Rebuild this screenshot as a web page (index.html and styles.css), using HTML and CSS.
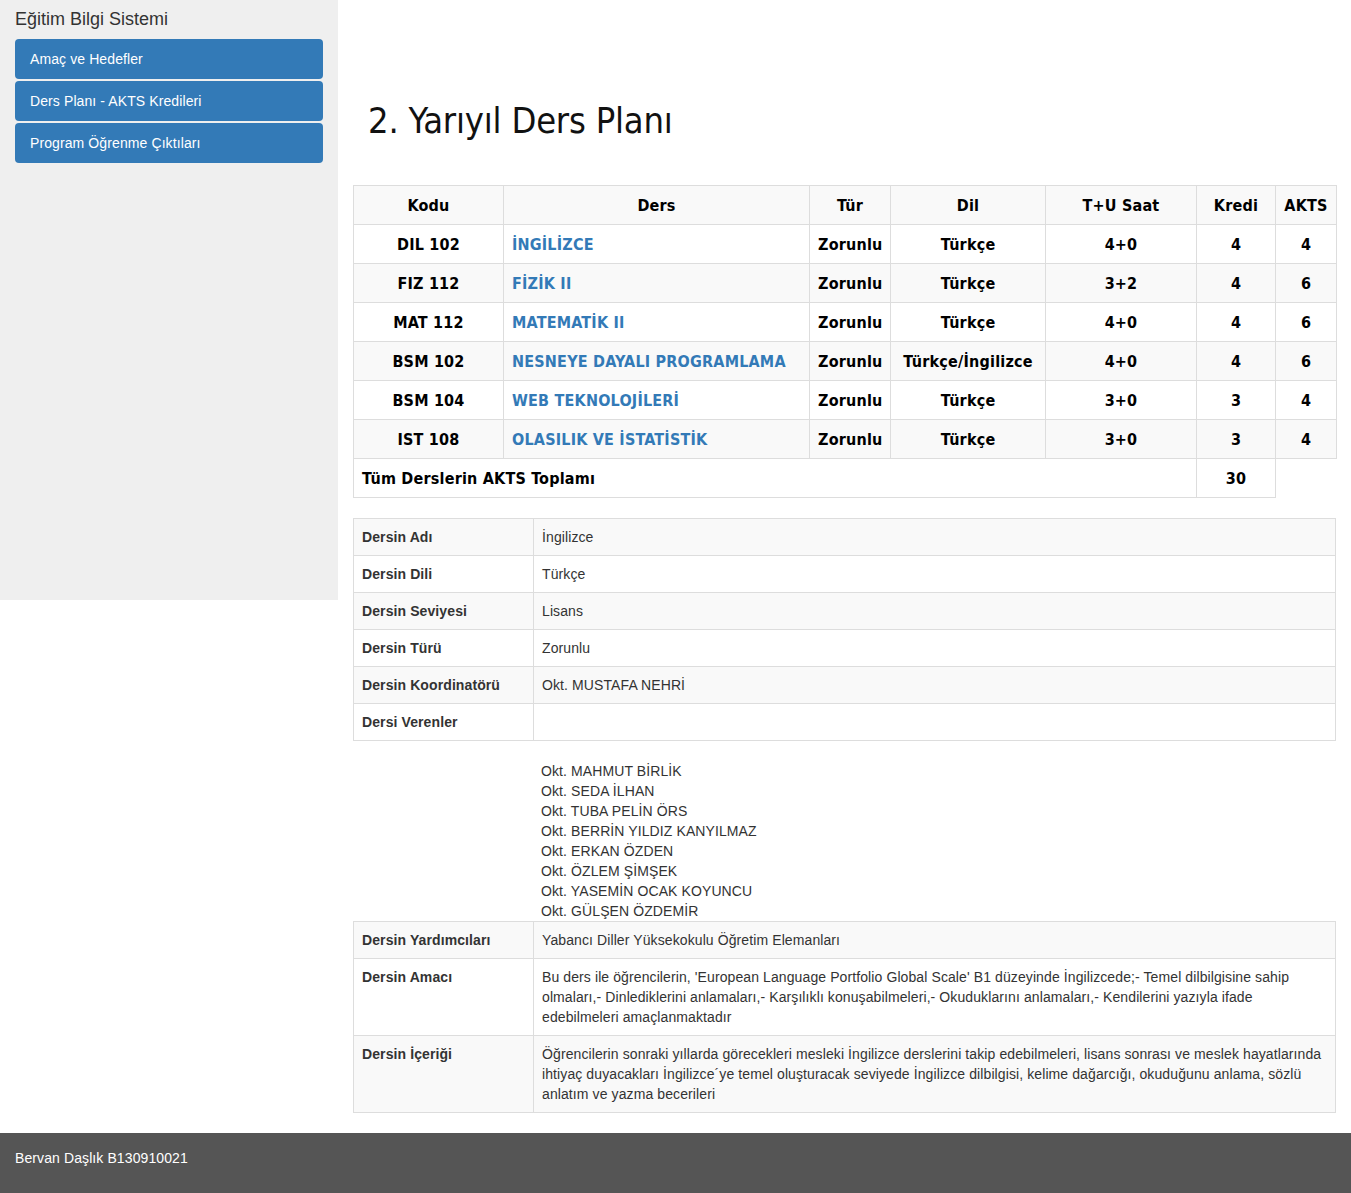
FILE: index.html
```html
<!DOCTYPE html>
<html lang="tr">
<head>
<meta charset="utf-8">
<title>Eğitim Bilgi Sistemi</title>
<link rel="stylesheet" href="styles.css">
</head>
<body>
<div class="layout">
  <aside class="sidebar">
    <div class="brand">Eğitim Bilgi Sistemi</div>
    <nav class="menu">
      <a class="menu-item" href="#">Amaç ve Hedefler</a>
      <a class="menu-item" href="#">Ders Planı - AKTS Kredileri</a>
      <a class="menu-item" href="#">Program Öğrenme Çıktıları</a>
    </nav>
  </aside>
  <main class="content">
    <h1 class="page-title">2. Yarıyıl Ders Planı</h1>
    <table class="plan">
      <colgroup>
        <col class="c-kod"><col class="c-ders"><col class="c-tur"><col class="c-dil"><col class="c-saat"><col class="c-kredi"><col class="c-akts">
      </colgroup>
      <tbody>
        <tr><th>Kodu</th><th>Ders</th><th>Tür</th><th>Dil</th><th>T+U Saat</th><th>Kredi</th><th>AKTS</th></tr>
        <tr><td>DIL 102</td><td class="name"><a href="#">İNGİLİZCE</a></td><td>Zorunlu</td><td>Türkçe</td><td>4+0</td><td>4</td><td>4</td></tr>
        <tr><td>FIZ 112</td><td class="name"><a href="#">FİZİK II</a></td><td>Zorunlu</td><td>Türkçe</td><td>3+2</td><td>4</td><td>6</td></tr>
        <tr><td>MAT 112</td><td class="name"><a href="#">MATEMATİK II</a></td><td>Zorunlu</td><td>Türkçe</td><td>4+0</td><td>4</td><td>6</td></tr>
        <tr><td>BSM 102</td><td class="name"><a href="#">NESNEYE DAYALI PROGRAMLAMA</a></td><td>Zorunlu</td><td>Türkçe/İngilizce</td><td>4+0</td><td>4</td><td>6</td></tr>
        <tr><td>BSM 104</td><td class="name"><a href="#">WEB TEKNOLOJİLERİ</a></td><td>Zorunlu</td><td>Türkçe</td><td>3+0</td><td>3</td><td>4</td></tr>
        <tr><td>IST 108</td><td class="name"><a href="#">OLASILIK VE İSTATİSTİK</a></td><td>Zorunlu</td><td>Türkçe</td><td>3+0</td><td>3</td><td>4</td></tr>
        <tr><td class="total-label" colspan="5">Tüm Derslerin AKTS Toplamı</td><td>30</td></tr>
      </tbody>
    </table>

    <table class="info">
      <colgroup><col class="c-label"><col></colgroup>
      <tbody>
        <tr><th>Dersin Adı</th><td>İngilizce</td></tr>
        <tr><th>Dersin Dili</th><td>Türkçe</td></tr>
        <tr><th>Dersin Seviyesi</th><td>Lisans</td></tr>
        <tr><th>Dersin Türü</th><td>Zorunlu</td></tr>
        <tr><th>Dersin Koordinatörü</th><td>Okt. MUSTAFA NEHRİ</td></tr>
        <tr><th>Dersi Verenler</th><td></td></tr>
      </tbody>
    </table>

    <div class="teachers">
      <div>Okt. MAHMUT BİRLİK</div>
      <div>Okt. SEDA İLHAN</div>
      <div>Okt. TUBA PELİN ÖRS</div>
      <div>Okt. BERRİN YILDIZ KANYILMAZ</div>
      <div>Okt. ERKAN ÖZDEN</div>
      <div>Okt. ÖZLEM ŞİMŞEK</div>
      <div>Okt. YASEMİN OCAK KOYUNCU</div>
      <div>Okt. GÜLŞEN ÖZDEMİR</div>
    </div>

    <table class="info last">
      <colgroup><col class="c-label"><col></colgroup>
      <tbody>
        <tr><th>Dersin Yardımcıları</th><td>Yabancı Diller Yüksekokulu Öğretim Elemanları</td></tr>
        <tr><th>Dersin Amacı</th><td>Bu ders ile öğrencilerin, 'European Language Portfolio Global Scale' B1 düzeyinde İngilizcede;- Temel dilbilgisine sahip olmaları,- Dinlediklerini anlamaları,- Karşılıklı konuşabilmeleri,- Okuduklarını anlamaları,- Kendilerini yazıyla ifade edebilmeleri amaçlanmaktadır</td></tr>
        <tr><th>Dersin İçeriği</th><td>Öğrencilerin sonraki yıllarda görecekleri mesleki İngilizce derslerini takip edebilmeleri, lisans sonrası ve meslek hayatlarında ihtiyaç duyacakları İngilizce´ye temel oluşturacak seviyede İngilizce dilbilgisi, kelime dağarcığı, okuduğunu anlama, sözlü anlatım ve yazma becerileri</td></tr>
      </tbody>
    </table>
  </main>
</div>
<footer class="footer">Bervan Daşlık B130910021</footer>
</body>
</html>
```

FILE: styles.css
```css
* { box-sizing: border-box; }

body {
  margin: 0;
  font-family: "Liberation Sans", Arial, sans-serif;
  font-size: 14px;
  line-height: 20px;
  letter-spacing: 0.1px;
  color: #333;
  background: #fff;
}

.layout {
  display: flex;
  align-items: flex-start;
}

.sidebar {
  width: 338px;
  flex: 0 0 338px;
  height: 600px;
  background: #efefef;
  padding: 9px 15px 0;
}

.brand {
  font-size: 18px;
  line-height: 20px;
  letter-spacing: 0;
  color: #333;
  margin-bottom: 10px;
}

.menu {
  display: flex;
  flex-direction: column;
  gap: 2px;
}

.menu-item {
  display: block;
  background: #337ab7;
  color: #fff;
  text-decoration: none;
  border-radius: 4px;
  padding: 10px 15px;
  line-height: 20px;
  font-size: 14px;
}

.content {
  flex: 1;
  min-width: 0;
  padding: 0 15px;
}

.page-title {
  font-family: "DejaVu Sans Condensed", "DejaVu Sans", sans-serif;
  font-stretch: condensed;
  font-weight: normal;
  font-size: 36px;
  line-height: 40px;
  letter-spacing: -0.2px;
  color: #111;
  margin: 101px 0 44px;
  padding-left: 15px;
}

.plan {
  width: 983px;
  table-layout: fixed;
  border-collapse: collapse;
  margin-bottom: 20px;
  font-family: "DejaVu Sans Condensed", "DejaVu Sans", sans-serif;
  font-stretch: condensed;
  font-weight: bold;
  font-size: 16px;
  line-height: 22px;
  letter-spacing: 0.2px;
  color: #000;
}

.c-kod { width: 150px; }
.c-ders { width: 306px; }
.c-tur { width: 81px; }
.c-dil { width: 155px; }
.c-saat { width: 151px; }
.c-kredi { width: 79px; }
.c-akts { width: 61px; }

.plan th,
.plan td {
  border: 1px solid #ddd;
  padding: 9px 8px 7px;
  text-align: center;
  white-space: nowrap;
  font-weight: bold;
}

.plan tr:nth-child(odd) { background: #f9f9f9; }

.plan td.name { text-align: left; }
.plan td.total-label { text-align: left; }

.plan a {
  color: #337ab7;
  text-decoration: none;
}

.info {
  width: 100%;
  table-layout: fixed;
  border-collapse: collapse;
}

.c-label { width: 180px; }

.info th,
.info td {
  border: 1px solid #ddd;
  padding: 8px;
  text-align: left;
  vertical-align: top;
  line-height: 20px;
}

.info th {
  font-weight: bold;
  color: #333;
}

.info tr:nth-child(odd) { background: #f9f9f9; }

.teachers {
  margin-top: 20px;
  padding-left: 188px;
}

.info.last { margin-bottom: 20px; }

.footer {
  height: 60px;
  background: #555;
  color: #fff;
  padding: 15px;
  line-height: 20px;
}
```
